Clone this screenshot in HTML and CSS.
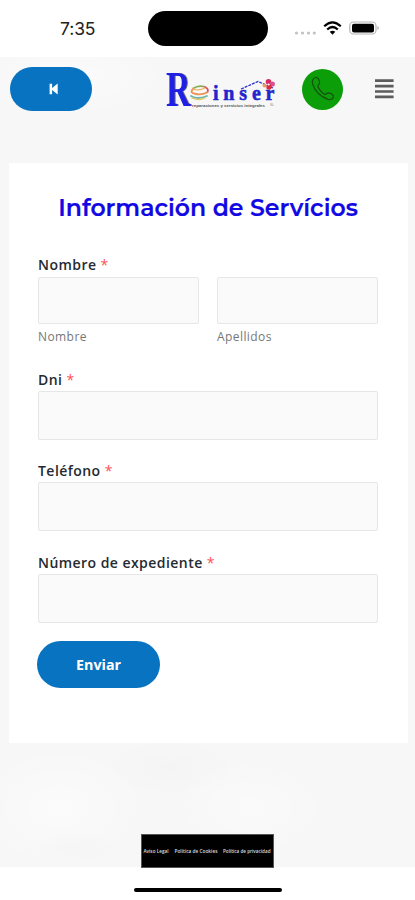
FILE: index.html
```html
<!DOCTYPE html>
<html lang="es">
<head>
<meta charset="utf-8">
<meta name="viewport" content="width=device-width, initial-scale=1">
<title>Información de Servícios</title>
<link rel="stylesheet" href="styles.css">
</head>
<body>
<div class="status">
  <span class="time">7:35</span>
  <span class="island"></span>
  <svg class="indicators" width="86" height="18" viewBox="0 0 86 18" aria-hidden="true">
    <g fill="#c2c2c2"><circle cx="1.5" cy="14" r="1.6"/><circle cx="7.5" cy="14" r="1.6"/><circle cx="13.5" cy="14" r="1.6"/><circle cx="19.3" cy="14" r="1.6"/></g>
    <g fill="none" stroke="#000" stroke-width="2.2"><path d="M29.2 7.3Q37.5-.5 45.8 7.3"/><path d="M32.2 10.5Q37.5 5.5 42.8 10.5"/></g>
    <path d="M34.7 12.8Q37.5 10.6 40.3 12.8L37.5 15.8z"/>
    <rect x="54.8" y="3" width="26.2" height="12" rx="3.8" fill="#fff" stroke="#b4b4b4" stroke-width="1.2"/>
    <rect x="57" y="4.7" width="22" height="8.8" rx="2"/>
    <path d="M82.4 6.9Q85.5 9 82.4 11.1z" fill="#b4b4b4"/>
  </svg>
</div>
<main class="page">
  <header class="header">
    <button class="back" aria-label="Volver"><svg width="10" height="12" viewBox="0 0 10 12"><path d="M.6.8h2.5v4.1L8.7.6v10.8L3.1 7.1v4.1H.6z" fill="#fff"/></svg></button>
    <svg class="logo" width="112" height="42" viewBox="0 0 112 42">
      <text class="mark" x="1" y="36" textLength="24.5" lengthAdjust="spacingAndGlyphs">R</text>
      <g fill="none" stroke-width="1.8" stroke-linecap="round">
        <path d="M28 18.5Q34 14.5 40 17" stroke="#89ad54"/><path d="M40 17Q44 19 42.5 22" stroke="#d95361"/>
        <path d="M28 19Q24 23 31 24Q37 25 42 22.5" stroke="#ef9256"/>
        <path d="M28 19Q34 21 40 18" stroke="#f1b66c" stroke-width="1.3"/>
        <path d="M26 26Q32 30 42 26" stroke="#67b5b0"/><path d="M27 28Q34 31 40 28" stroke="#e9c65f" stroke-width="1.3"/>
      </g>
      <text class="word" x="48" y="30" textLength="61.5">inser</text>
      <path d="M76 19L93 11.5L108 18" fill="none" stroke="#2a32cf" stroke-width="1.3" stroke-dasharray="3 1"/>
      <g><circle cx="99.5" cy="15.5" r="2" fill="#ec9a5d"/><circle cx="103.5" cy="11.8" r="2.8" fill="#d92b62"/><circle cx="107.3" cy="14" r="2.6" fill="#db4f91"/><circle cx="104" cy="17" r="2.7" fill="#d82b43"/><circle cx="103.6" cy="14.5" r="1" fill="#fff"/></g>
      <text class="tagline" x="27" y="36.5" textLength="73" lengthAdjust="spacingAndGlyphs">reparaciones y servicios integrales</text>
      <text class="tagline faint" x="105" y="36.3" textLength="4" lengthAdjust="spacingAndGlyphs">SL</text>
    </svg>
    <button class="phone" aria-label="Llamar"><svg width="24" height="26" viewBox="0 0 24 26"><path d="M4.5 1.5C2 2.2.5 5.2 1.7 8.3C4.2 15.5 10 21 17.1 23.4C20 24.3 22.5 22.5 22.4 20.2C22.2 18.2 18.9 16.9 17.2 16.8C15.5 16.8 15 18.9 13.8 18.4C10.8 16.6 8 13.5 6.9 10.2C6.5 9 8.5 8.4 8.6 7C8.7 4.3 7 1.1 4.5 1.5z" fill="none" stroke="#174f12" stroke-width="1.2"/></svg></button>
    <button class="menu" aria-label="Menú"><svg width="19" height="20" viewBox="0 0 19 20"><path d="M0 1.7h18.6M0 7.1h18.6M0 12.5h18.6M0 17.9h18.6" stroke="#5c5c5c" stroke-width="2.7"/></svg></button>
  </header>
  <form class="card">
    <h1>Información de Servícios</h1>
    <div class="field names">
      <div class="label">Nombre <b>*</b></div>
      <div class="pair">
        <label><input type="text"><span>Nombre</span></label>
        <label><input type="text"><span>Apellidos</span></label>
      </div>
    </div>
    <label class="field"><span class="label low">Dni <b>*</b></span><input type="text"></label>
    <label class="field"><span class="label low">Teléfono <b>*</b></span><input type="text"></label>
    <label class="field"><span class="label low">Número de expediente <b>*</b></span><input type="text"></label>
    <button class="send" type="button">Enviar</button>
  </form>
  <footer class="legal">
    <svg width="131" height="12" viewBox="0 0 131 12">
      <text x="1.5" y="8" textLength="25" lengthAdjust="spacingAndGlyphs">Aviso Legal</text>
      <text x="32.5" y="8" textLength="43" lengthAdjust="spacingAndGlyphs">Política de Cookies</text>
      <text x="81" y="8" textLength="47.5" lengthAdjust="spacingAndGlyphs">Política de privacidad</text>
    </svg>
  </footer>
</main>
<div class="home"></div>
</body>
</html>
```
FILE: styles.css
```css
* { box-sizing: border-box; }
body { margin: 0; width: 415px; height: 900px; overflow: hidden; background: #fff; font-family: "Open Sans", sans-serif; }
button { border: 0; padding: 0; font: inherit; }
svg { overflow: visible; }
.status { height: 57px; padding: 11px 34px 0 60px; display: grid; grid-template-columns: 88px 120px 1fr; align-items: start; }
.time { font: 400 17.5px/36px Inter, sans-serif; letter-spacing: -.1px; color: #222; }
.island { height: 35px; border-radius: 18px; background: #000; }
.indicators { justify-self: end; margin-top: 8px; }
.page {
  height: 810px; padding: 10px 7px 0 9px; display: flex; flex-direction: column;
  background:
    radial-gradient(ellipse 45px 18px at 75px 790px, rgba(0,0,0,.012), transparent),
    radial-gradient(ellipse 70px 30px at 170px 710px, rgba(0,0,0,.012), transparent),
    radial-gradient(ellipse 90px 60px at 60px 750px, rgba(255,255,255,.5), transparent),
    radial-gradient(ellipse 80px 50px at 250px 750px, rgba(255,255,255,.4), transparent),
    radial-gradient(ellipse 100px 40px at 70px 20px, rgba(255,255,255,.5), transparent),
    #f7f7f7;
}
.header { height: 44px; padding: 0 14px 0 1px; display: flex; align-items: center; flex: none; }
.back { width: 82px; height: 44px; border-radius: 22px; background: #0873c0; display: flex; align-items: center; justify-content: center; padding-left: 5px; }
.logo { margin-left: 73px; margin-top: 3px; }
.mark { font: 700 50px "Liberation Serif", serif; fill: #2020e4; filter: drop-shadow(1px .5px .3px #777); }
.word { font: 700 20px "Liberation Serif", serif; fill: #2424cd; stroke: #2424cd; stroke-width: .5px; }
.tagline { font: 700 3.8px "Liberation Sans", sans-serif; fill: #555; }
.faint { fill: #aaa; }
.phone { width: 41px; height: 41px; border-radius: 50%; background: #0b9e08; margin-left: 25px; display: flex; align-items: center; justify-content: center; }
.menu { width: 19px; height: 20px; margin-left: auto; background: none; display: flex; }
.card { flex: none; width: 399px; height: 580px; margin-top: 51.5px; padding: 30px 30px 0 29px; background: #fff; }
h1 { margin: 0 -5px; font: 600 23.55px/30px "Montserrat", "Open Sans", sans-serif; color: #1208e4; -webkit-text-stroke: .2px #1208e4; text-align: center; white-space: nowrap; }
.field { display: block; height: 91.4px; }
.names { height: 114.5px; margin-top: 30px; }
.label { display: block; height: 24px; font-size: 14px; line-height: 24px; font-weight: 600; letter-spacing: .45px; color: #252a30; white-space: nowrap; }
.low { line-height: 26px; }
.label b { color: #ff5058; font-weight: 400; }
input { display: block; width: 100%; height: 49px; border: 1px solid #e5e6e6; border-radius: 2px; background: #fafafa; }
.pair { display: grid; grid-template-columns: 1fr 1fr; gap: 18px; }
.pair input { height: 47px; }
.pair span { display: block; font-size: 12px; line-height: 25px; letter-spacing: .42px; color: #777; }
.send { display: block; width: 123px; height: 47px; margin: 0 0 0 -1px; border-radius: 24px; background: #0873c0; color: #fff; font-weight: 700; font-size: 14.3px; }
.legal { width: 133px; height: 34px; flex: none; align-self: center; margin: 91.5px 2px 0 0; background: #000; border: 1px solid #555; display: flex; align-items: center; justify-content: center; }
.legal text { font: 600 5px "Open Sans", sans-serif; fill: #ddd; }
.home { width: 148px; height: 4px; margin: 21px auto 0 134px; border-radius: 2px; background: #000; }
```
